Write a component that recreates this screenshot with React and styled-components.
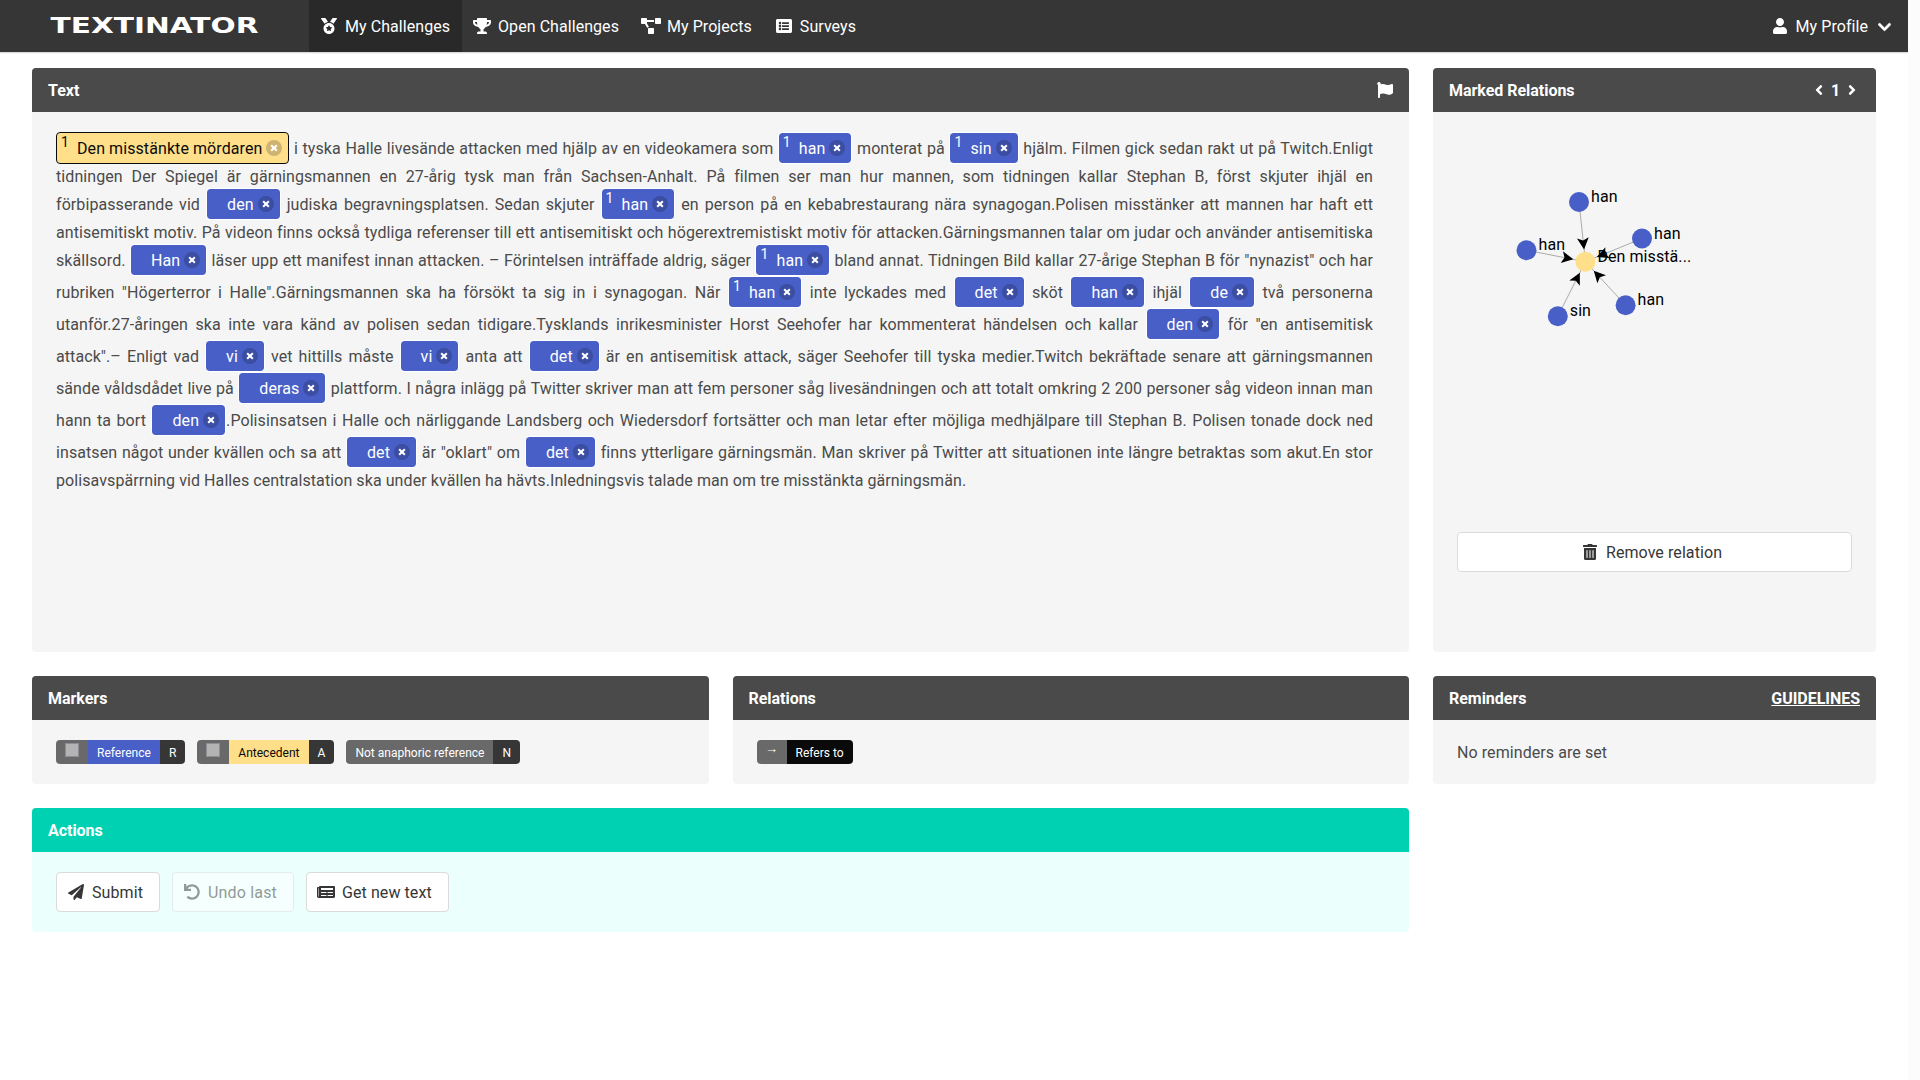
import React from "react";
import styled, { createGlobalStyle, css } from "styled-components";
import {
  FaMedal, FaTrophy, FaProjectDiagram, FaListAlt, FaUser, FaChevronDown, FaFlag,
  FaAngleLeft, FaAngleRight, FaTrashAlt, FaPaperPlane, FaUndo, FaNewspaper,
} from "react-icons/fa";

const GlobalStyle = createGlobalStyle`
  *, *::before, *::after { box-sizing: border-box; }
  html { background: #fff; }
  body {
    margin: 0;
    color: #4a4a4a;
    font: 400 16px/1.5 Roboto, "Liberation Sans", sans-serif;
    letter-spacing: 0.08px;
  }
  button { font: inherit; letter-spacing: inherit; }
`;

const Page = styled.div`
  display: flex;
  min-height: 1080px;
`;
const Content = styled.div`
  width: 1908px;
`;
const ScrollTrack = styled.div`
  width: 12px;
  background: #fcfcfc;
`;

const Navbar = styled.nav`
  display: flex;
  height: 52px;
  padding-left: 32px;
  letter-spacing: 0.06px;
  background: #363636;
  box-shadow: 0 1px 0 #dcdada, 0 2px 0 #f5f5f5;
`;
const Brand = styled.a`
  display: flex;
  align-items: center;
  width: 277px;
  padding: 0 0 3px 14px;
`;
const NavItem = styled.a`
  display: flex;
  align-items: center;
  gap: 4px;
  padding: 0 12px 0 8px;
  color: #fff;
  background: ${(p) => (p.$active ? "#292929" : "transparent")};
`;
const NavEnd = styled.div`
  display: flex;
  margin-left: auto;
`;
const Label = styled.span`
  padding-top: 2px;
`;
const Icon = styled.span`
  display: inline-flex;
  align-items: center;
  justify-content: center;
  width: ${(p) => p.$box || 24}px;
  height: 24px;
  margin-top: ${(p) => p.$drop || 0}px;
  svg {
    flex: none;
    width: ${(p) => p.$glyph || 16}px;
    height: 16px;
  }
`;

const Board = styled.main`
  display: grid;
  grid-template-columns: repeat(4, 1fr);
  gap: 24px;
  padding: 16px 32px;
`;
const Wide = styled.div`
  grid-column: span 3;
  display: grid;
  grid-template-columns: ${(p) => (p.$split ? "1fr 1fr" : "1fr")};
  gap: 24px;
`;
const Panel = styled.section`
  display: flex;
  flex-direction: column;
  border-radius: 4px;
  overflow: hidden;
  background: ${(p) => (p.$primary ? "#ebfffc" : "#f5f5f5")};
`;
const PanelHeader = styled.header`
  display: flex;
  align-items: center;
  justify-content: space-between;
  height: 44px;
  padding: 0 16px;
  color: #fff;
  font-weight: 700;
  line-height: 20px;
  letter-spacing: -0.03px;
  background: ${(p) => (p.$primary ? "#00d1b2" : "#4a4a4a")};
`;
const PanelBody = styled.div`
  padding: 20px 24px;
  ${(p) => p.$text && css`padding-top: 21px; padding-bottom: 19px;`}
  ${(p) => p.$tall && css`height: 540px; padding-right: 36px; text-align: justify;`}
  ${(p) => p.$stack && css`display: flex; flex-direction: column; height: 540px;`}
`;
const Row = styled.div`
  display: flex;
  gap: 12px;
`;
const Pager = styled.div`
  display: flex;
  align-items: center;
`;
const PageNumber = styled.span`
  width: 17px;
  padding-top: 2px;
  text-align: center;
`;
const Guidelines = styled.a`
  padding-top: 2px;
  text-decoration: underline;
`;

const NoBreak = styled.span`
  white-space: nowrap;
`;
const Mark = styled.span`
  position: relative;
  display: inline-flex;
  align-items: center;
  height: 32px;
  margin: -1px 0 1px;
  padding: 2px 6px 0 20px;
  border: 1px solid ${(p) => (p.$antecedent ? "#0a0a0a" : "#fff")};
  border-radius: 4px;
  color: ${(p) => (p.$antecedent ? "#0a0a0a" : "#fff")};
  background: ${(p) => (p.$antecedent ? "#ffdf8a" : "#485fc7")};
  background-clip: padding-box;
  white-space: nowrap;
`;
const MarkIndex = styled.span`
  position: absolute;
  left: 4px;
  top: 1px;
  font-size: 14px;
  line-height: 16px;
`;
const Delete = styled.span`
  position: relative;
  width: 16px;
  height: 16px;
  margin: -2px 0 0 4px;
  border-radius: 50%;
  background: rgba(10, 10, 10, 0.2);
  &::before, &::after {
    content: "";
    position: absolute;
    left: 50%;
    top: 50%;
    background: #fff;
    transform: translate(-50%, -50%) rotate(45deg);
  }
  &::before { width: 8px; height: 2px; }
  &::after { width: 2px; height: 8px; }
`;

const TagGroup = styled.div`
  display: flex;
  height: 24px;
  border-radius: 4px;
  overflow: hidden;
`;
const tones = {
  grey: ["#696969", "#fff"],
  blue: ["#485fc7", "#fff"],
  yellow: ["#ffdf8a", "#0a0a0a"],
  dark: ["#363636", "#fff"],
  black: ["#0a0a0a", "#fff"],
};
const TagPart = styled.span`
  display: flex;
  align-items: center;
  padding: ${(p) => (p.$raised ? "0 9px 4px" : "2px 9px 0")};
  font-size: 12px;
  letter-spacing: 0.015px;
  color: ${(p) => tones[p.$tone][1]};
  background: ${(p) => tones[p.$tone][0]};
`;
const CheckSquare = styled.span`
  width: 14px;
  height: 14px;
  border: 1px solid #8e8e96;
  background: #b3b3b3;
`;
const Arrow = styled.span`
  display: flex;
  justify-content: center;
  width: 12px;
  padding-bottom: 3px;
  font-family: "Liberation Sans", sans-serif;
  font-size: 13px;
`;

const Button = styled.button`
  display: flex;
  align-items: center;
  justify-content: center;
  gap: 4px;
  height: 40px;
  padding: 0 16px 0 7px;
  border: 1px solid #dbdbdb;
  border-radius: 4px;
  color: #363636;
  background: #fff;
  ${(p) => p.disabled && css`opacity: 0.5; letter-spacing: 0.18px;`}
`;
const Graph = styled.svg`
  display: block;
  width: 395px;
  height: 400px;
  font-size: 16px;
`;

const navLinks = [
  [FaMedal, 16, "My Challenges"],
  [FaTrophy, 18, "Open Challenges"],
  [FaProjectDiagram, 20, "My Projects"],
  [FaListAlt, 16, "Surveys"],
];

/* Marked words are written as [word] or, inside a numbered relation, [1:word];
   words in braces stay on one line. */
const passage =
  '[A:Den misstänkte mördaren] i tyska Halle livesände attacken med hjälp av en videokamera som [1:han] monterat på [1:sin] hjälm. Filmen gick sedan rakt ut på Twitch.Enligt tidningen Der Spiegel är gärningsmannen en 27-årig tysk man från Sachsen-Anhalt. På filmen ser man hur mannen, som tidningen kallar Stephan B, först skjuter ihjäl en förbipasserande vid [den] judiska begravningsplatsen. Sedan skjuter [1:han] en person på en kebabrestaurang nära synagogan.Polisen misstänker att mannen har haft ett antisemitiskt motiv. På videon finns också tydliga referenser till ett antisemitiskt och högerextremistiskt motiv för attacken.Gärningsmannen talar om judar och använder antisemitiska skällsord. [Han] läser upp ett manifest innan attacken. – Förintelsen inträffade aldrig, säger [1:han] bland annat. Tidningen Bild kallar 27-årige Stephan B för "nynazist" och har rubriken "Högerterror i Halle".Gärningsmannen ska ha försökt ta sig in i synagogan. När [1:han] inte lyckades med [det] sköt [han] ihjäl [de] två personerna utanför.27-åringen ska inte vara känd av polisen sedan tidigare.Tysklands inrikesminister Horst Seehofer har kommenterat händelsen och kallar [den] för "en antisemitisk {attack".– Enligt} vad [vi] vet hittills måste [vi] anta att [det] är en antisemitisk attack, säger Seehofer till tyska medier.Twitch bekräftade senare att gärningsmannen {sände våldsdådet} live på [deras] plattform. I några inlägg på Twitter skriver man att fem personer såg livesändningen och att totalt omkring 2 200 personer såg videon innan man {hann ta} bort [den].Polisinsatsen i Halle och närliggande Landsberg och Wiedersdorf fortsätter och man letar efter möjliga medhjälpare till Stephan B. Polisen tonade dock ned {insatsen något} under kvällen och sa att [det] är "oklart" om [det] finns ytterligare gärningsmän. Man skriver på Twitter att situationen inte längre betraktas som akut.En stor polisavspärrning vid Halles centralstation ska under kvällen ha hävts.Inledningsvis talade man om tre misstänkta gärningsmän.';

function Passage() {
  return passage.split(/(\[[^\]]+\]|\{[^}]+\})/).map((part, i) => {
    if (part[0] === "{") return <NoBreak key={i}>{part.slice(1, -1)}</NoBreak>;
    const m = part.match(/^\[(?:([A1]):)?(.+)\]$/);
    if (!m) return part;
    return (
      <Mark key={i} $antecedent={m[1] === "A"}>
        {m[1] && <MarkIndex>1</MarkIndex>}
        {m[2]}
        <Delete />
      </Mark>
    );
  });
}

const hub = { x: 128.4, y: 129.7 };
const mentions = [
  { x: 122, y: 70, label: "han" },
  { x: 185, y: 106.5, label: "han" },
  { x: 69.5, y: 118.2, label: "han" },
  { x: 100.8, y: 184.3, label: "sin" },
  { x: 168.6, y: 173.2, label: "han" },
];

function RelationGraph() {
  return (
    <Graph viewBox="0 0 395 400">
      {mentions.map((n, i) => (
        <line key={i} x1={n.x} y1={n.y} x2={hub.x} y2={hub.y} stroke="#aaa" />
      ))}
      {[...mentions, { ...hub, label: "Den misstä...", hub: true }].map((n, i) => (
        <g key={i}>
          <circle cx={n.x} cy={n.y} r="10" fill={n.hub ? "#ffdf8a" : "#485fc7"} />
          <text x={n.x + 12} y={n.y}>{n.label}</text>
        </g>
      ))}
      {mentions.map((n, i) => {
        const angle = (Math.atan2(hub.y - n.y, hub.x - n.x) * 180) / Math.PI;
        return (
          <path
            key={i}
            d="M-12.3 0 L-24 -5.9 L-21.3 0 L-24 5.9 Z"
            transform={`translate(${hub.x} ${hub.y}) rotate(${angle})`}
          />
        );
      })}
    </Graph>
  );
}

export default function App() {
  return (
    <>
      <GlobalStyle />
      <Page>
        <Content>
          <Navbar>
            <Brand>
              <svg width="220" height="28" viewBox="0 0 220 28">
                <text x="4.5" y="21.5" fill="#fff" fontFamily="DejaVu Sans" fontWeight="700" fontSize="20.5" letterSpacing="0" textLength="208" lengthAdjust="spacingAndGlyphs">TEXTINATOR</text>
              </svg>
            </Brand>
            {navLinks.map(([Glyph, width, label], i) => (
              <NavItem key={label} $active={i === 0}>
                <Icon $glyph={width}><Glyph /></Icon><Label>{label}</Label>
              </NavItem>
            ))}
            <NavEnd>
              <NavItem>
                <Icon $glyph={14}><FaUser /></Icon>
                <Label>My Profile</Label>
                <Icon $glyph={13} $drop={2}><FaChevronDown stroke="currentColor" strokeWidth="16" /></Icon>
              </NavItem>
            </NavEnd>
          </Navbar>
          <Board>
            <Wide>
              <Panel>
                <PanelHeader><Label>Text</Label><Icon $box={16}><FaFlag /></Icon></PanelHeader>
                <PanelBody $text $tall lang="sv"><Passage /></PanelBody>
              </Panel>
            </Wide>
            <Panel>
              <PanelHeader>
                <Label>Marked Relations</Label>
                <Pager>
                  <Icon $box={16}><FaAngleLeft /></Icon>
                  <PageNumber>1</PageNumber>
                  <Icon $box={16}><FaAngleRight /></Icon>
                </Pager>
              </PanelHeader>
              <PanelBody $stack>
                <RelationGraph />
                <Button><Icon $glyph={14}><FaTrashAlt /></Icon><Label>Remove relation</Label></Button>
              </PanelBody>
            </Panel>
            <Wide $split>
              <Panel>
                <PanelHeader><Label>Markers</Label></PanelHeader>
                <PanelBody>
                  <Row>
                    <TagGroup>
                      <TagPart $tone="grey" $raised><CheckSquare /></TagPart>
                      <TagPart $tone="blue">Reference</TagPart>
                      <TagPart $tone="dark">R</TagPart>
                    </TagGroup>
                    <TagGroup>
                      <TagPart $tone="grey" $raised><CheckSquare /></TagPart>
                      <TagPart $tone="yellow">Antecedent</TagPart>
                      <TagPart $tone="dark">A</TagPart>
                    </TagGroup>
                    <TagGroup>
                      <TagPart $tone="grey">Not anaphoric reference</TagPart>
                      <TagPart $tone="dark">N</TagPart>
                    </TagGroup>
                  </Row>
                </PanelBody>
              </Panel>
              <Panel>
                <PanelHeader><Label>Relations</Label></PanelHeader>
                <PanelBody>
                  <Row>
                    <TagGroup>
                      <TagPart $tone="grey" $raised><Arrow>→</Arrow></TagPart>
                      <TagPart $tone="black">Refers to</TagPart>
                    </TagGroup>
                  </Row>
                </PanelBody>
              </Panel>
            </Wide>
            <Panel>
              <PanelHeader><Label>Reminders</Label><Guidelines>GUIDELINES</Guidelines></PanelHeader>
              <PanelBody $text>No reminders are set</PanelBody>
            </Panel>
            <Wide>
              <Panel $primary>
                <PanelHeader $primary><Label>Actions</Label></PanelHeader>
                <PanelBody>
                  <Row>
                    <Button><Icon><FaPaperPlane /></Icon><Label>Submit</Label></Button>
                    <Button disabled><Icon><FaUndo /></Icon><Label>Undo last</Label></Button>
                    <Button><Icon $glyph={18}><FaNewspaper /></Icon><Label>Get new text</Label></Button>
                  </Row>
                </PanelBody>
              </Panel>
            </Wide>
          </Board>
        </Content>
        <ScrollTrack />
      </Page>
    </>
  );
}
